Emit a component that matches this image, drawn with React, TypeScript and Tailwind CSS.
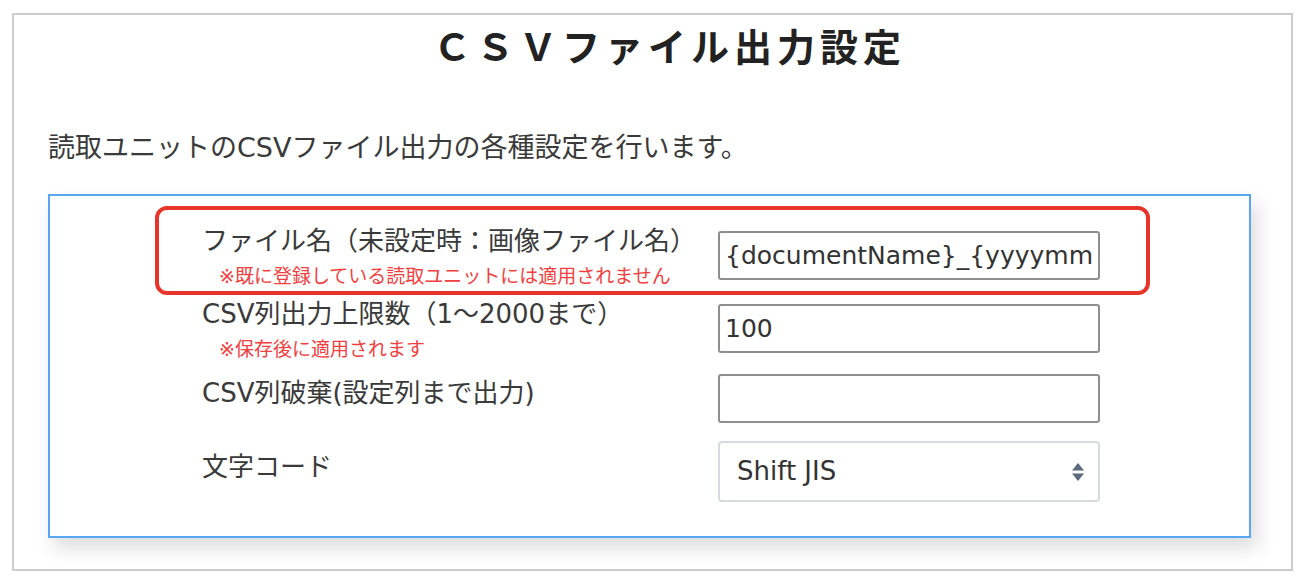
import React from "react";

const font = { fontFamily: '"DejaVu Sans", "Noto Sans CJK JP", sans-serif' };
const titleFont = { fontFamily: '"Noto Sans CJK JP", sans-serif' };

type Row = {
  label: string;
  note?: string;
  kind: "input" | "select";
  value: string;
  highlight?: boolean;
  height: string;
  pad: string;
  labelPad: string;
};

const rows: Row[] = [
  {
    label: "ファイル名（未設定時：画像ファイル名）",
    note: "※既に登録している読取ユニットには適用されません",
    kind: "input",
    value: "{documentName}_{yyyymmddHHmmss}",
    highlight: true,
    height: "h-[89px]",
    pad: "pt-[10px]",
    labelPad: "",
  },
  {
    label: "CSV列出力上限数（1～2000まで）",
    note: "※保存後に適用されます",
    kind: "input",
    value: "100",
    height: "h-[67px]",
    pad: "",
    labelPad: "",
  },
  {
    label: "CSV列破棄(設定列まで出力)",
    kind: "input",
    value: "",
    height: "h-[73px]",
    pad: "",
    labelPad: "pb-[11px]",
  },
  {
    label: "文字コード",
    kind: "select",
    value: "Shift JIS",
    height: "h-[73px]",
    pad: "",
    labelPad: "pb-[9px]",
  },
];

function SortArrows() {
  return (
    <svg width="16" height="20" viewBox="0 0 16 20" className="pointer-events-none absolute right-[14px] top-1/2 -translate-y-1/2">
      <path d="M8 1 L14 8.5 L2 8.5 Z" fill="#5b6a80" />
      <path d="M2 11.5 L14 11.5 L8 19 Z" fill="#5b6a80" />
    </svg>
  );
}

export default function App() {
  return (
    <div className="w-[1304px] h-[582px] bg-white pl-[12px] pt-[13px]" style={font}>
      <div className="w-[1281px] h-[558px] border-2 border-[#cdcdcd] pl-[34px] pt-[6px]">
        <h1 className="text-center text-[38px] leading-[48px] font-bold tracking-[5px] text-[#222]" style={titleFont}>
          ＣＳＶファイル出力設定
        </h1>

        <p className="mt-[59px] text-[27px] leading-[40px] text-[#3a3a3a] whitespace-nowrap">
          読取ユニットのCSVファイル出力の各種設定を行います。
        </p>

        <div className="mt-[26px] w-[1203px] h-[344px] border-2 border-[#5ba6f2] bg-white shadow-[6px_10px_18px_rgba(0,0,0,0.14)] pt-[10px] pl-[105px]">
          {rows.map((row) => (
            <div
              key={row.label}
              className={`w-[995px] ${row.height} ${row.pad} flex items-center pl-[43px] border-4 rounded-[12px] ${
                row.highlight ? "border-[#e8352b]" : "border-transparent"
              }`}
            >
              <div className={`w-[516px] shrink-0 ${row.labelPad}`}>
                <div className="text-[26px] leading-[40px] text-[#3a3a3a] whitespace-nowrap">{row.label}</div>
                {row.note && (
                  <div className="pl-[17px] text-[19px] leading-[30px] text-[#f23e3e] whitespace-nowrap">{row.note}</div>
                )}
              </div>

              {row.kind === "input" ? (
                <input
                  readOnly
                  value={row.value}
                  className="w-[382px] h-[49px] border-2 border-[#8e8e8e] rounded-[3px] px-[5px] text-[25px] text-[#333] outline-none bg-white"
                  style={font}
                />
              ) : (
                <div className="relative w-[382px] h-[61px]">
                  <select
                    value={row.value}
                    onChange={() => {}}
                    className="appearance-none w-full h-full border-2 border-[#d6dae1] rounded-[4px] pl-[17px] text-[26px] text-[#333] bg-white outline-none"
                    style={font}
                  >
                    <option>Shift JIS</option>
                    <option>UTF-8</option>
                  </select>
                  <SortArrows />
                </div>
              )}
            </div>
          ))}
        </div>
      </div>
    </div>
  );
}
